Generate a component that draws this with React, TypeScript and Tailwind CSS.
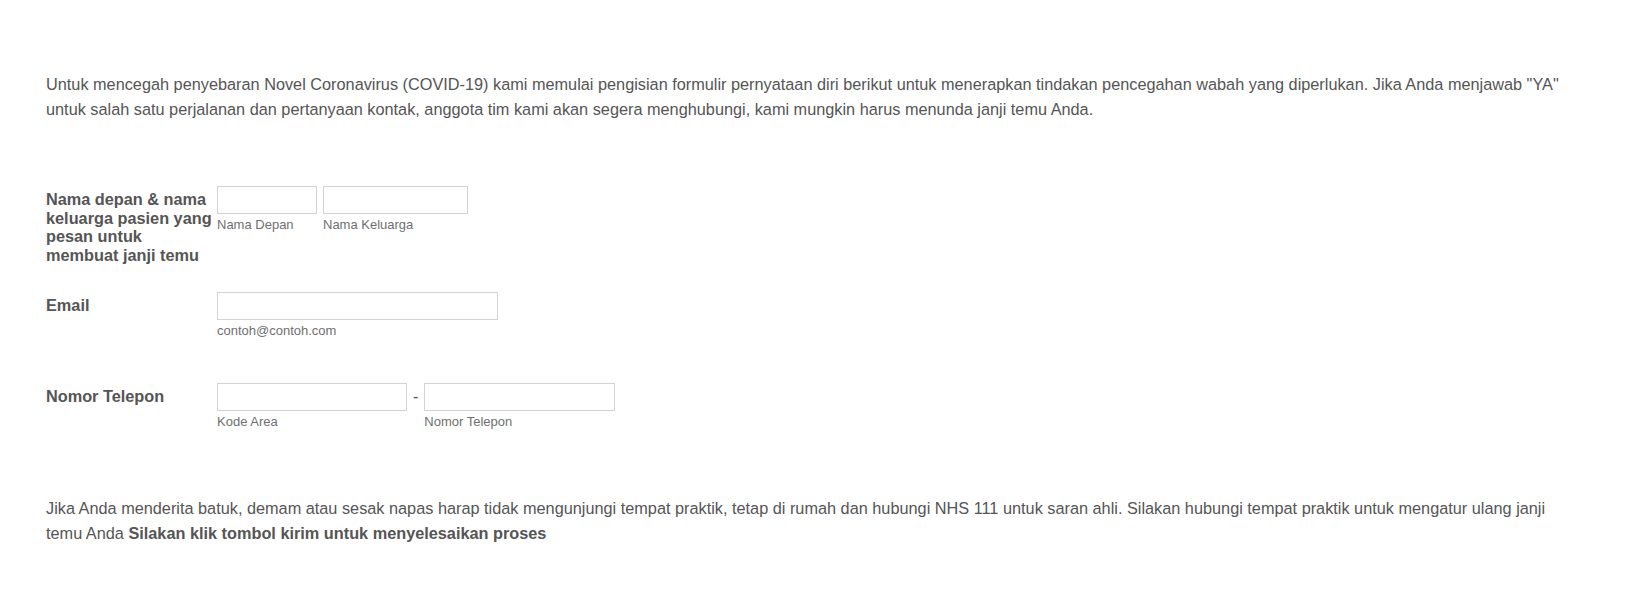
export default function App() {
  const input = 'block h-[28px] border border-[#d3d3d3] bg-white';
  const sub = 'mt-[3px] text-[13px] leading-[16px] text-[#6f6f6f]';
  const label = 'w-[167px] mr-[4px] shrink-0 pt-[4px] text-[16.3px] leading-[18.5px] font-bold text-[#555]';

  return (
    <div className="min-h-screen bg-white px-[46px] pt-[72px] font-['Liberation_Sans',Arial,sans-serif] text-[#555]">
      <p className="text-[16.3px] leading-[25px]">
        Untuk mencegah penyebaran Novel Coronavirus (COVID-19) kami memulai pengisian formulir pernyataan diri berikut untuk menerapkan tindakan pencegahan wabah yang diperlukan. Jika Anda menjawab "YA" untuk salah satu perjalanan dan pertanyaan kontak, anggota tim kami akan segera menghubungi, kami mungkin harus menunda janji temu Anda.
      </p>

      <div className="mt-[64px] flex items-start">
        <div className={label}>Nama depan &amp; nama keluarga pasien yang pesan untuk membuat janji temu</div>
        <div className="flex gap-[6px]">
          <div>
            <input className={`${input} w-[100px]`} />
            <div className={sub}>Nama Depan</div>
          </div>
          <div>
            <input className={`${input} w-[145px]`} />
            <div className={sub}>Nama Keluarga</div>
          </div>
        </div>
      </div>

      <div className="mt-[28px] flex items-start">
        <div className={`${label} pt-[3px]`}>Email</div>
        <div>
          <input className={`${input} w-[281px]`} />
          <div className={sub}>contoh@contoh.com</div>
        </div>
      </div>

      <div className="mt-[44px] flex items-start">
        <div className={label}>Nomor Telepon</div>
        <div className="flex items-start">
          <div>
            <input className={`${input} w-[190px]`} />
            <div className={sub}>Kode Area</div>
          </div>
          <span className="mx-[6px] pt-[5px] text-[16px] leading-[18px]">-</span>
          <div>
            <input className={`${input} w-[191px]`} />
            <div className={sub}>Nomor Telepon</div>
          </div>
        </div>
      </div>

      <p className="mt-[66px] text-[16.3px] leading-[25px]">
        Jika Anda menderita batuk, demam atau sesak napas harap tidak mengunjungi tempat praktik, tetap di rumah dan hubungi NHS 111 untuk saran ahli. Silakan hubungi tempat praktik untuk mengatur ulang janji temu Anda <b>Silakan klik tombol kirim untuk menyelesaikan proses</b>
      </p>
    </div>
  );
}
